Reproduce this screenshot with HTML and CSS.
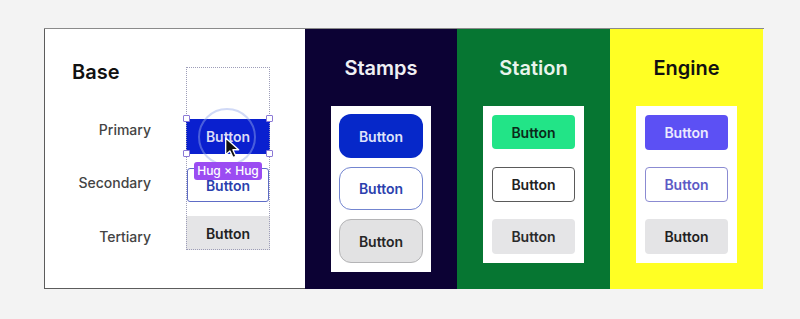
FILE: index.html
```html
<!DOCTYPE html>
<html>
<head>
<meta charset="utf-8">
<link rel="stylesheet" href="styles.css">
</head>
<body>
<div class="frame">
  <section class="panel base">
    <div class="labels">
      <div class="base-title">Base</div>
      <div class="label l-primary">Primary</div>
      <div class="label l-secondary">Secondary</div>
      <div class="label l-tertiary">Tertiary</div>
    </div>
    <div class="stack">
      <div class="btn b-primary">Button</div>
      <div class="btn b-secondary">Button</div>
      <div class="btn b-tertiary">Button</div>
      <div class="halo"></div>
      <span class="handle h-tl"></span>
      <span class="handle h-tr"></span>
      <span class="handle h-bl"></span>
      <span class="handle h-br"></span>
      <svg class="cursor" width="18" height="23" viewBox="0 0 16 20">
        <path d="M1.5 1.5 L1.5 16.5 L5.2 13 L8 19 L10.6 17.8 L7.9 12 L13 12 Z" fill="#111" stroke="#fff" stroke-width="1.2" stroke-linejoin="round"/>
      </svg>
      <div class="badge">Hug × Hug</div>
    </div>
  </section>
  <section class="panel theme stamps">
    <div class="theme-title">Stamps</div>
    <div class="card">
      <div class="btn s-primary">Button</div>
      <div class="btn s-secondary">Button</div>
      <div class="btn s-tertiary">Button</div>
    </div>
  </section>
  <section class="panel theme station">
    <div class="theme-title">Station</div>
    <div class="card card-tight">
      <div class="btn t-primary">Button</div>
      <div class="btn t-secondary">Button</div>
      <div class="btn t-tertiary">Button</div>
    </div>
  </section>
  <section class="panel theme engine">
    <div class="theme-title">Engine</div>
    <div class="card card-tight">
      <div class="btn e-primary">Button</div>
      <div class="btn e-secondary">Button</div>
      <div class="btn e-tertiary">Button</div>
    </div>
  </section>
</div>
</body>
</html>
```

FILE: styles.css
```css
* { box-sizing: border-box; }
html, body { margin: 0; padding: 0; }
body {
  width: 800px;
  height: 319px;
  background: #f3f3f3;
  font-family: Inter, "Open Sans", sans-serif;
  padding: 28px 0 0 44px;
  overflow: hidden;
}
.frame {
  display: flex;
  width: 720px;
  height: 261px;
  border-top: 1px solid #8a8a8a;
}
.panel { height: 100%; }
.base {
  width: 261px;
  background: #fff;
  border-left: 1px solid #5c5c5c;
  border-bottom: 1px solid #5c5c5c;
  display: flex;
}
.labels {
  width: 106px;
  padding-left: 27px;
  display: flex;
  flex-direction: column;
}
.base-title {
  font-size: 20px;
  line-height: 24px;
  font-weight: 600;
  color: #111;
  margin-top: 31px;
}
.label {
  font-size: 14px;
  line-height: 20px;
  font-weight: 500;
  color: #444;
  text-align: right;
}
.l-primary { margin-top: 36px; }
.l-secondary { margin-top: 33px; }
.l-tertiary { margin-top: 34px; }

.stack {
  position: relative;
  width: 84px;
  height: 183px;
  margin-left: 35px;
  margin-top: 38px;
  outline: 1px dotted #9d9db8;
  outline-offset: -1px;
  display: flex;
  flex-direction: column;
  padding-top: 52px;
  gap: 14px;
}
.btn {
  display: flex;
  align-items: center;
  justify-content: center;
  font-size: 14px;
  font-weight: 600;
}
.b-primary {
  height: 35px;
  background: #0a20cf;
  color: #dcdcf6;
}
.b-secondary {
  height: 34px;
  margin: 0 1px;
  background: #fff;
  border: 1.5px solid #5e6cc6;
  border-radius: 3px;
  color: #2b3fae;
}
.b-tertiary {
  height: 34px;
  background: #e5e5e7;
  color: #222;
}
.halo {
  position: absolute;
  left: 12px;
  top: 41px;
  width: 58px;
  height: 58px;
  border-radius: 50%;
  border: 2px solid rgba(150, 170, 235, 0.45);
}
.handle {
  position: absolute;
  width: 7px;
  height: 7px;
  background: #fff;
  border: 1px solid #8c7ad6;
  border-radius: 1px;
}
.h-tl { left: -3px; top: 48px; }
.h-tr { right: -3px; top: 48px; }
.h-bl { left: -3px; top: 83px; }
.h-br { right: -3px; top: 83px; }
.cursor {
  position: absolute;
  left: 38px;
  top: 69px;
}
.badge {
  position: absolute;
  left: 8px;
  top: 95px;
  width: 68px;
  height: 18px;
  border-radius: 3px;
  background: #9b4cf2;
  color: #fff;
  font-size: 12px;
  font-weight: 500;
  line-height: 18px;
  text-align: center;
}

.theme {
  display: flex;
  flex-direction: column;
  align-items: center;
  padding-top: 27px;
}
.theme-title {
  font-size: 20px;
  line-height: 24px;
  font-weight: 600;
}
.stamps { width: 152px; background: #0c0234; color: #f0f0f4; }
.station { width: 153px; background: #067632; color: #e8f4ec; }
.engine { width: 153px; background: #ffff24; color: #111; }

.card {
  margin-top: 26px;
  width: 100px;
  background: #fff;
  display: flex;
  flex-direction: column;
  padding: 8px 8px 9px 8px;
  gap: 9px;
}
.card-tight { width: 101px; padding: 9px; gap: 17px; }

.s-primary {
  height: 44px;
  background: #0628c9;
  color: #dfe3fa;
  border-radius: 12px;
}
.s-secondary {
  height: 43px;
  background: #fff;
  color: #2c3fae;
  border: 1.5px solid #7385d0;
  border-radius: 12px;
}
.s-tertiary {
  height: 44px;
  background: #e2e2e3;
  color: #262626;
  border: 1.5px solid #b4b4b6;
  border-radius: 12px;
}

.t-primary {
  height: 34px;
  background: #22e487;
  color: #0b2a19;
  border-radius: 4px;
}
.t-secondary {
  height: 35px;
  background: #fff;
  color: #222;
  border: 1.5px solid #5a5a5a;
  border-radius: 4px;
  margin-top: 1px;
}
.t-tertiary {
  height: 35px;
  background: #e5e5e7;
  color: #2a2a2a;
  border-radius: 4px;
}

.e-primary {
  height: 35px;
  background: #5c50f4;
  color: #eceaff;
  border-radius: 4px;
}
.e-secondary {
  height: 35px;
  background: #fff;
  color: #5c5bc6;
  border: 1.5px solid #8b8bd2;
  border-radius: 4px;
}
.e-tertiary {
  height: 35px;
  background: #e4e4e6;
  color: #1f1f1f;
  border-radius: 4px;
}
```
